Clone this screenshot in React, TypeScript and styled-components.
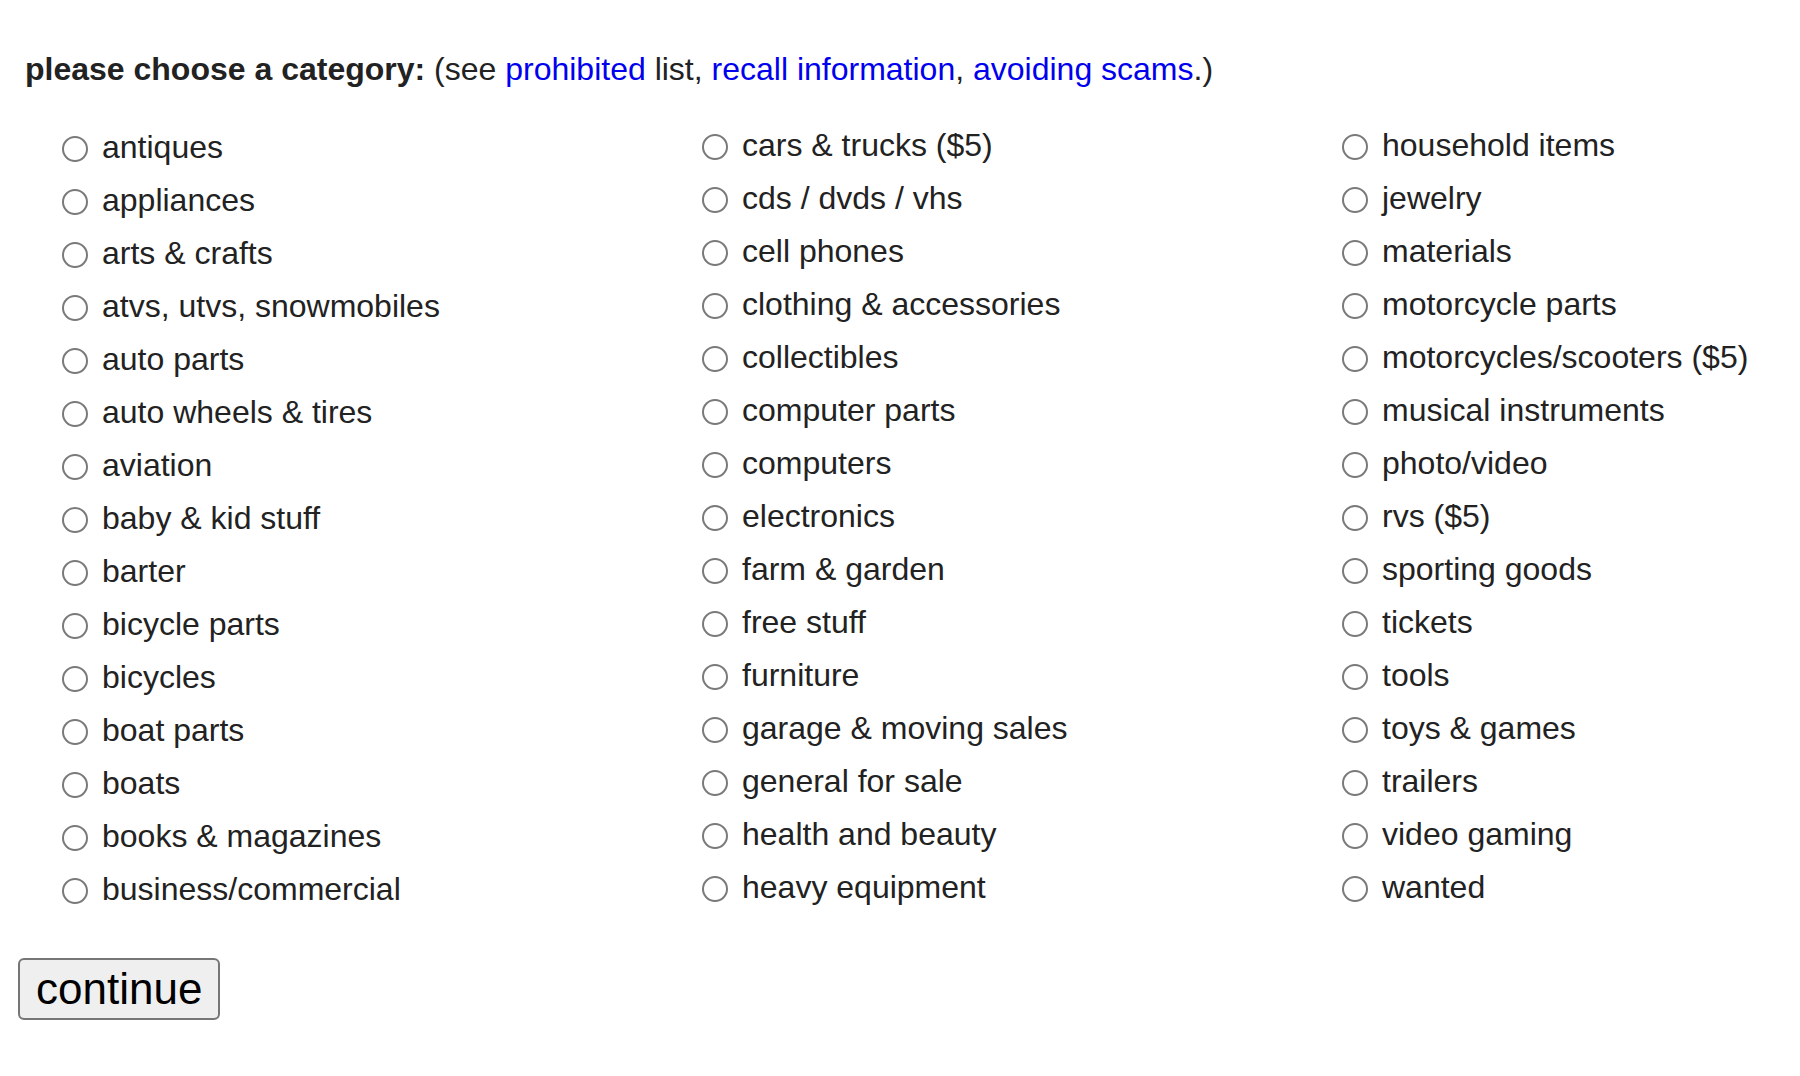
import React from "react";
import styled, { createGlobalStyle } from "styled-components";

const GlobalStyle = createGlobalStyle`
  html, body {
    margin: 0;
    padding: 0;
    background: #ffffff;
  }
  body {
    font-family: "Liberation Sans", Arial, Helvetica, sans-serif;
    font-size: 32px;
    color: #222222;
  }
`;

const Page = styled.form`
  display: flex;
  flex-direction: column;
  align-items: flex-start;
  padding: 51px 0 40px 18px;
`;

const Heading = styled.div`
  margin-left: 7px;
  line-height: normal;
  white-space: nowrap;
`;

const Strong = styled.b`
  font-weight: 700;
`;

const Link = styled.a`
  color: #0000ee;
  text-decoration: none;
`;

const Columns = styled.div`
  display: grid;
  grid-template-columns: 640px 640px 1fr;
  align-self: stretch;
  margin: 31px 0 0 44px;
`;

const Column = styled.div<{ $offset?: number }>`
  display: flex;
  flex-direction: column;
  padding-top: ${(p) => p.$offset ?? 0}px;
`;

const Row = styled.label`
  display: flex;
  align-items: center;
  gap: 14px;
  height: 53px;
  white-space: nowrap;
  cursor: pointer;
`;

const Radio = styled.input.attrs({ type: "radio", name: "id" })`
  appearance: none;
  -webkit-appearance: none;
  box-sizing: border-box;
  flex: none;
  width: 26px;
  height: 26px;
  margin: 0;
  border: 2px solid #7a7a7a;
  border-radius: 50%;
  background: #ffffff;
  position: relative;
  top: 1px;
`;

const Label = styled.span`
  line-height: normal;
`;

const Continue = styled.button`
  margin-top: 42px;
  box-sizing: border-box;
  height: 62px;
  padding: 0 16px;
  font-family: "Liberation Sans", Arial, Helvetica, sans-serif;
  font-size: 44px;
  color: #000000;
  background: #efefef;
  border: 2px solid #767676;
  border-radius: 6px;
  line-height: 1;
  cursor: pointer;
`;

const col1 = [
  "antiques",
  "appliances",
  "arts & crafts",
  "atvs, utvs, snowmobiles",
  "auto parts",
  "auto wheels & tires",
  "aviation",
  "baby & kid stuff",
  "barter",
  "bicycle parts",
  "bicycles",
  "boat parts",
  "boats",
  "books & magazines",
  "business/commercial",
];

const col2 = [
  "cars & trucks ($5)",
  "cds / dvds / vhs",
  "cell phones",
  "clothing & accessories",
  "collectibles",
  "computer parts",
  "computers",
  "electronics",
  "farm & garden",
  "free stuff",
  "furniture",
  "garage & moving sales",
  "general for sale",
  "health and beauty",
  "heavy equipment",
];

const col3 = [
  "household items",
  "jewelry",
  "materials",
  "motorcycle parts",
  "motorcycles/scooters ($5)",
  "musical instruments",
  "photo/video",
  "rvs ($5)",
  "sporting goods",
  "tickets",
  "tools",
  "toys & games",
  "trailers",
  "video gaming",
  "wanted",
];

const CategoryColumn: React.FC<{ items: string[]; offset?: number }> = ({ items, offset }) => (
  <Column $offset={offset}>
    {items.map((it) => (
      <Row key={it}>
        <Radio value={it} />
        <Label>{it}</Label>
      </Row>
    ))}
  </Column>
);

export default function App() {
  return (
    <>
      <GlobalStyle />
      <Page onSubmit={(e) => e.preventDefault()}>
        <Heading>
          <Strong>please choose a category:</Strong> (see <Link href="#">prohibited</Link> list,{" "}
          <Link href="#">recall information</Link>, <Link href="#">avoiding scams</Link>.)
        </Heading>
        <Columns>
          <CategoryColumn items={col1} offset={2} />
          <CategoryColumn items={col2} />
          <CategoryColumn items={col3} />
        </Columns>
        <Continue type="submit">continue</Continue>
      </Page>
    </>
  );
}
